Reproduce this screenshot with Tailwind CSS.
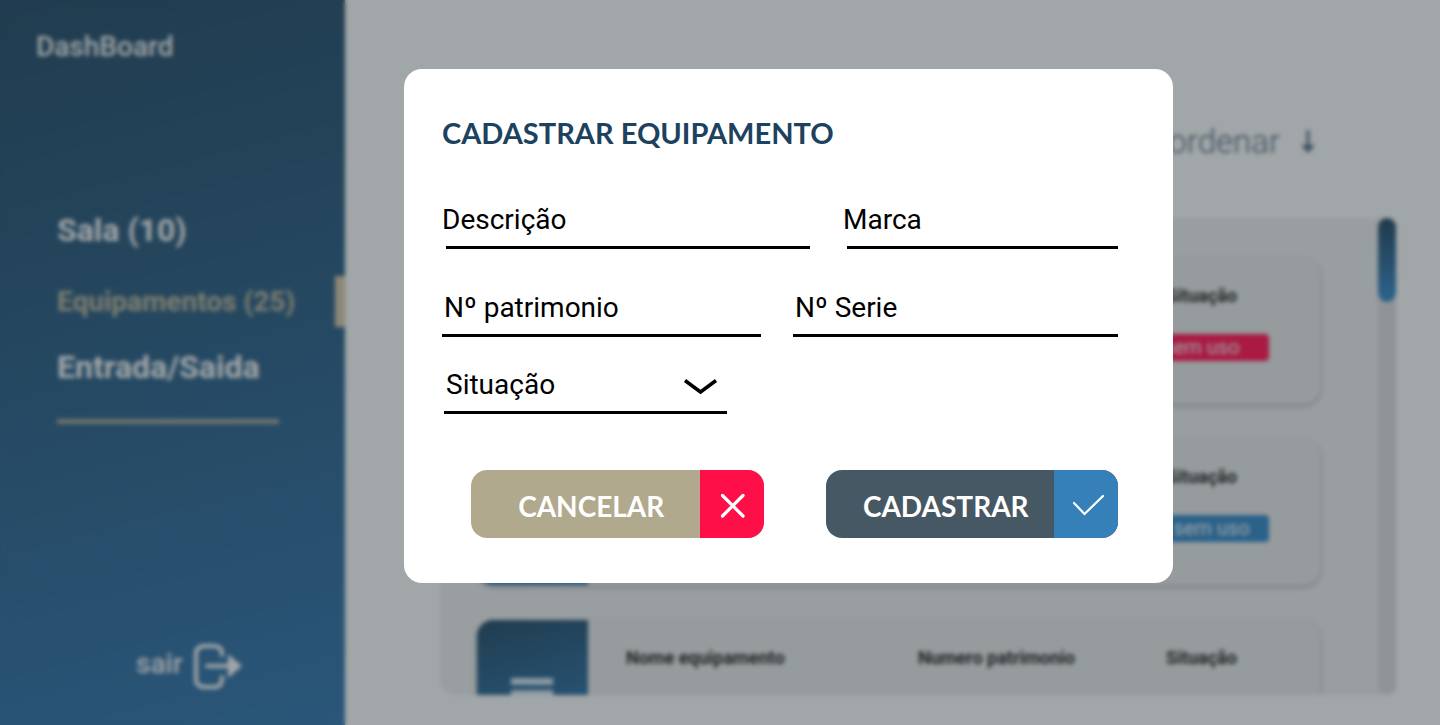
<!DOCTYPE html>
<html lang="pt-BR">
<head>
<meta charset="utf-8">
<meta name="viewport" content="width=device-width, initial-scale=1">
<title>DashBoard - Cadastrar equipamento</title>
<script src="https://cdn.jsdelivr.net/npm/@tailwindcss/browser@4"></script>
</head>
<body class="bg-[#a1a6a8] font-[Roboto,sans-serif]">
<div class="flex h-screen overflow-hidden">
  <aside class="flex w-[345px] shrink-0 flex-col bg-linear-[165deg,#213c4f,#24455c_35%,#2a5679] pb-[35px] text-[#a1a6a8]">
    <p class="mt-[27px] ml-9 text-[28px] leading-10 font-medium">DashBoard</p>
    <nav class="mt-[143px] flex flex-col pl-[57px] text-[32px] font-bold leading-10">
      <a href="#sala">Sala (10)</a>
      <a href="#equipamentos" class="mt-[26px] flex h-[51px] items-center justify-between text-[28px] text-[#7f7f70]">Equipamentos (25)<span class="h-full w-2.5 bg-[#8b8876]"></span></a>
      <a href="#entrada" class="mt-5">Entrada/Saida</a>
      <span class="mt-8 h-[5px] w-[222px] bg-[#6c736e]"></span>
    </nav>
    <a href="#sair" class="mt-auto ml-34 flex h-12 items-center gap-2 text-[28px] leading-10 font-medium"><span class="pb-1">sair</span>
      <svg class="h-12 w-[54px]" viewBox="0 0 54 48" fill="none" stroke="currentColor" stroke-width="4" stroke-linecap="round" aria-hidden="true"><path d="M31 13V12Q31 4 23 4H14Q5 4 5 12V37Q5 45 14 45H23Q31 45 31 37V35M16 24H44"/><path d="M37 12L51 24L37 36Z" fill="currentColor" stroke="none"/></svg>
    </a>
  </aside>
  <main class="flex min-w-0 flex-1 flex-col pr-11 pb-[30px] pl-[95px]">
    <button type="button" class="mt-[122px] mr-20 flex items-center gap-5 self-end text-[33px] leading-10 font-light text-[#3d505c]">ordenar
      <svg class="h-7 w-4" viewBox="0 0 16 28" fill="none" stroke="currentColor" stroke-width="3" aria-hidden="true"><path d="M8 2V20"/><path d="M1 17H15L8 25Z" fill="currentColor" stroke="none"/></svg>
    </button>
    <section class="mt-14 flex min-h-0 flex-1 rounded-2xl bg-[#999ea0]">
      <div class="flex min-w-0 flex-1 flex-col gap-[35px] overflow-hidden rounded-l-2xl pt-10 pr-[58px] pl-[37px]">
        <article class="flex h-[146px] shrink-0 overflow-hidden rounded-2xl bg-[#969b9d] shadow-[0_2px_5px_#00000038]">
          <div class="w-[111px] bg-linear-[165deg,#213d50,#2a6088]"></div>
          <div class="grid flex-1 grid-cols-[292px_248px_1fr] pt-6 pl-[38px] text-lg font-bold text-[#222627]"><p>Nome equipamento</p><p>Numero patrimonio</p><div><p>Situação</p><p class="-ml-8 mt-6 h-[27px] w-[135px] rounded-sm bg-[#a91b43] text-center text-xl leading-[27px] font-normal text-[#a1a6a8]">sem uso</p></div></div>
        </article>
        <article class="flex h-[146px] shrink-0 overflow-hidden rounded-2xl bg-[#969b9d] shadow-[0_2px_5px_#00000038]">
          <div class="w-[111px] bg-linear-[165deg,#213d50,#2a6088]"></div>
          <div class="grid flex-1 grid-cols-[292px_248px_1fr] pt-6 pl-[38px] text-lg font-bold text-[#222627]"><p>Nome equipamento</p><p>Numero patrimonio</p><div><p>Situação</p><p class="-ml-8 mt-6 h-[27px] w-[135px] rounded-sm bg-[#2b628a] pl-5 text-center text-xl leading-[27px] font-normal text-[#a1a6a8]">sem uso</p></div></div>
        </article>
        <article class="flex h-[146px] shrink-0 overflow-hidden rounded-2xl bg-[#969b9d] shadow-[0_2px_5px_#00000038]">
          <div class="w-[111px] bg-linear-[165deg,#213d50,#2a6088]"><svg class="h-full w-full" viewBox="0 0 111 146" fill="#8b99a3" aria-hidden="true"><path d="M34 58H76V65H34ZM34 70H76V110H34Z"/></svg></div>
          <div class="grid flex-1 grid-cols-[292px_248px_1fr] pt-6 pl-[38px] text-lg font-bold text-[#222627]"><p>Nome equipamento</p><p>Numero patrimonio</p><p>Situação</p></div>
        </article>
      </div>
      <div class="w-[18px] rounded-full bg-[#8f9496]"><div class="h-[84px] rounded-full bg-linear-to-b from-[#213a4d] to-[#2c648c]"></div></div>
    </section>
  </main>
</div>

<div class="fixed inset-0 overflow-hidden pt-[69px] pr-6 pl-[404px] backdrop-blur-[2px]">
  <form role="dialog" aria-labelledby="titulo" class="max-w-[769px] rounded-[18px] bg-white pt-11 pr-[55px] pb-[45px] pl-[38px] text-[28px] text-black">
    <h1 id="titulo" class="font-[Lato,sans-serif] text-[29px] leading-10 font-bold text-[#1c4260]">CADASTRAR EQUIPAMENTO</h1>
    <div class="mt-[49px] flex gap-[33px]">
      <div class="flex flex-[368] flex-col gap-2">
        <input aria-label="Descrição" placeholder="Descrição" class="h-9 w-full outline-none placeholder:text-black">
        <span class="ml-1 h-[3px] bg-black"></span>
      </div>
      <div class="flex flex-[275] flex-col gap-2">
        <input aria-label="Marca" placeholder="Marca" class="h-9 w-full outline-none placeholder:text-black">
        <span class="ml-1 h-[3px] bg-black"></span>
      </div>
    </div>
    <div class="mt-[41px] flex gap-8">
      <div class="flex flex-[319] flex-col gap-2">
        <input aria-label="Nº patrimonio" placeholder="Nº patrimonio" class="h-9 w-full pl-0.5 outline-none placeholder:text-black">
        <span class="h-[3px] bg-black"></span>
      </div>
      <div class="flex flex-[325] flex-col gap-2">
        <input aria-label="Nº Serie" placeholder="Nº Serie" class="h-9 w-full pl-0.5 outline-none placeholder:text-black">
        <span class="h-[3px] bg-black"></span>
      </div>
    </div>
    <div class="relative mt-[30px] ml-0.5 flex w-[283px] flex-col gap-2">
      <select aria-label="Situação" class="h-9 w-full appearance-none pl-0.5 leading-9 outline-none"><option>Situação</option></select>
      <span class="h-[3px] bg-black"></span>
      <svg class="pointer-events-none absolute top-2.5 right-2 h-5 w-9" viewBox="0 0 36 20" fill="none" stroke="currentColor" stroke-width="3.500" aria-hidden="true"><path d="M2 3.500L17.500 15L33 3.500"/></svg>
    </div>
    <div class="mt-14 flex gap-[62px] pl-[29px] font-[Lato,sans-serif] text-[28px] font-bold text-white">
      <button type="button" class="flex h-[68px] flex-1 overflow-hidden rounded-2xl bg-[#b1a98d]">
        <span class="flex h-full flex-1 items-center justify-center pt-1 pl-3">CANCELAR</span>
        <span class="flex h-full w-16 items-center justify-center bg-[#ff0f47]"><svg class="mt-1 ml-0.5 size-7" viewBox="0 0 28 28" fill="none" stroke="currentColor" stroke-width="3.200" stroke-linecap="round" aria-hidden="true"><path d="M3.500 3.500L24 24M24 3.500L3.500 24"/></svg></span>
      </button>
      <button type="submit" class="flex h-[68px] flex-1 overflow-hidden rounded-2xl bg-[#465863]">
        <span class="flex h-full flex-1 items-center justify-center pt-1 pl-3">CADASTRAR</span>
        <span class="flex h-full w-16 items-center justify-center bg-[#3680b9]"><svg class="mt-0.5 ml-1 h-6 w-8" viewBox="0 0 32 24" fill="none" stroke="currentColor" stroke-width="2.200" stroke-linecap="round" aria-hidden="true"><path d="M2 10L12.500 21L31 3"/></svg></span>
      </button>
    </div>
  </form>
</div>
</body>
</html>
